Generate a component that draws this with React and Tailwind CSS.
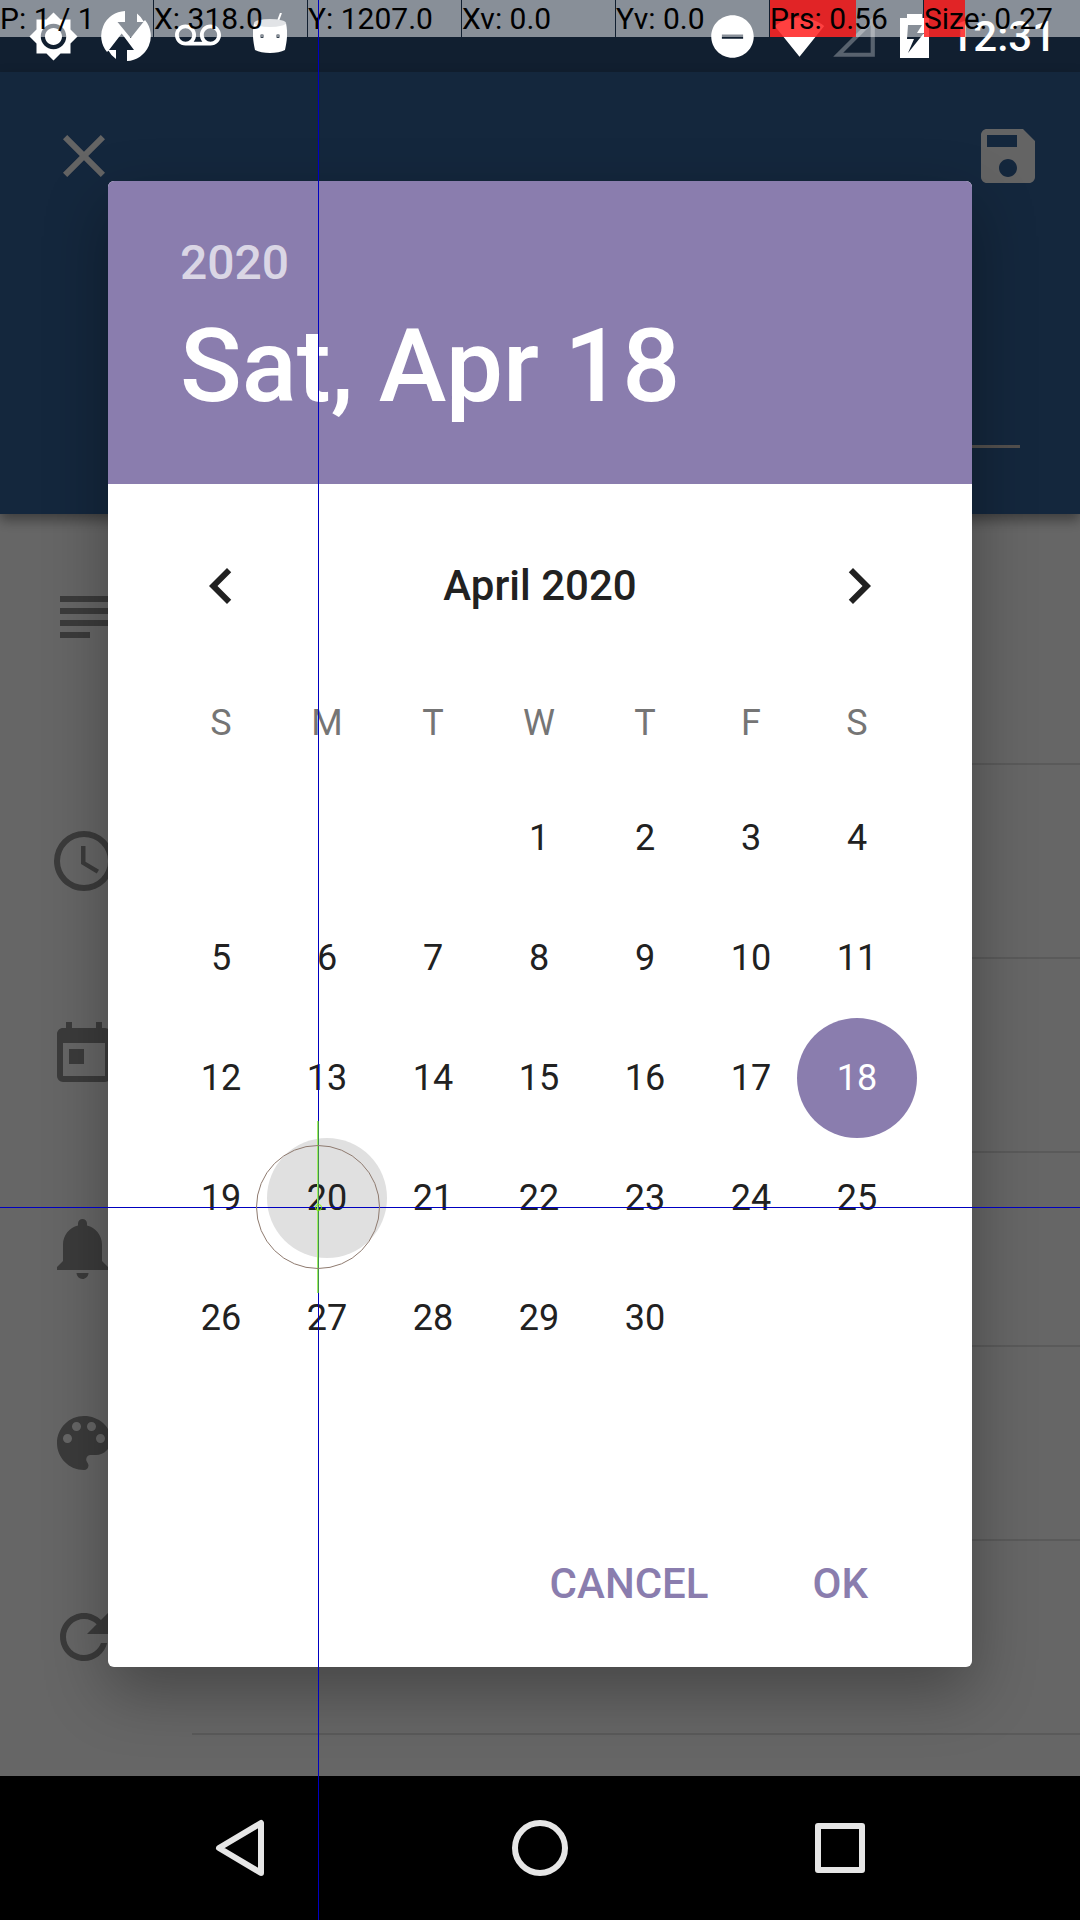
import React from "react";

const ICONS = {
  close: "M19 6.41L17.59 5 12 10.59 6.41 5 5 6.41 10.59 12 5 17.59 6.41 19 12 13.41 17.59 19 19 17.59 13.41 12z",
  save: "M17 3H5c-1.11 0-2 .9-2 2v14c0 1.1.89 2 2 2h14c1.1 0 2-.9 2-2V7l-4-4zm-5 16c-1.66 0-3-1.34-3-3s1.34-3 3-3 3 1.34 3 3-1.34 3-3 3zm3-10H5V5h10v4z",
  text: "M4 5H20V7H4zM4 9H20V11H4zM4 13H20V15H4zM4 17H14V19H4z",
  clock: "M12 20A8 8 0 0 0 20 12 8 8 0 0 0 12 4 8 8 0 0 0 4 12 8 8 0 0 0 12 20M12 2A10 10 0 0 1 22 12 10 10 0 0 1 12 22C6.47 22 2 17.5 2 12A10 10 0 0 1 12 2M12.5 7V12.25L17 14.92 16.25 16.15 11 13V7H12.5Z",
  calendar: "M7 10H12V15H7M19 19H5V8H19M19 3H18V1H16V3H8V1H6V3H5C3.89 3 3 3.9 3 5V19A2 2 0 0 0 5 21H19A2 2 0 0 0 21 19V5A2 2 0 0 0 19 3Z",
  bell: "M11.5 22C11.64 22 11.77 22 11.9 21.96 12.55 21.82 13.09 21.38 13.34 20.78 13.44 20.54 13.5 20.27 13.5 20H9.5A2 2 0 0 0 11.5 22M18 10.5C18 7.43 15.86 4.86 13 4.18V3.5A1.5 1.5 0 0 0 11.5 2 1.5 1.5 0 0 0 10 3.5V4.18C7.13 4.86 5 7.43 5 10.5V16L3 18V19H20V18L18 16",
  palette: "M12 3c-4.97 0-9 4.03-9 9s4.03 9 9 9c.83 0 1.5-.67 1.5-1.5 0-.39-.15-.74-.39-1.01-.23-.26-.38-.61-.38-.99 0-.83.67-1.5 1.5-1.5H16c2.76 0 5-2.24 5-5 0-4.42-4.03-8-9-8zm-5.500 9c-.83 0-1.5-.67-1.5-1.500S5.670 9 6.500 9 8 9.670 8 10.500 7.330 12 6.500 12zm3-4C8.670 8 8 7.330 8 6.500S8.670 5 9.500 5s1.500.670 1.500 1.500S10.330 8 9.500 8zm5 0c-.83 0-1.5-.67-1.5-1.500S13.670 5 14.500 5s1.500.670 1.500 1.500S15.330 8 14.500 8zm3 4c-.83 0-1.5-.67-1.5-1.500S16.670 9 17.500 9s1.500.670 1.500 1.500-.67 1.500-1.500 1.500z",
  refresh: "M17.65 6.35C16.2 4.9 14.21 4 12 4c-4.42 0-7.99 3.58-7.99 8s3.57 8 7.99 8c3.73 0 6.84-2.55 7.73-6h-2.08c-.82 2.33-3.04 4-5.65 4-3.31 0-6-2.69-6-6s2.69-6 6-6c1.66 0 3.14.69 4.22 1.78L13 11h7V4l-2.35 2.35z",
  chevronLeft: "M15.41 7.41L14 6l-6 6 6 6 1.41-1.41L10.83 12z",
  chevronRight: "M10 6L8.590 7.410 13.170 12l-4.580 4.590L10 18l6-6z",
  brightness: "M20 8.690V4h-4.690L12 .690 8.690 4H4v4.690L.690 12 4 15.310V20h4.690L12 23.310 15.310 20H20v-4.690L23.310 12 20 8.690zM12 18c-3.310 0-6-2.690-6-6s2.690-6 6-6 6 2.690 6 6-2.690 6-6 6zm0-10c-2.210 0-4 1.790-4 4s1.790 4 4 4 4-1.790 4-4-1.790-4-4-4z",
  voicemail: "M18.5 6C15.46 6 13 8.46 13 11.5c0 1.33.47 2.55 1.26 3.5H9.740c.79-.95 1.26-2.17 1.26-3.5C11 8.46 8.54 6 5.5 6S0 8.46 0 11.5 2.46 17 5.5 17h13c3.04 0 5.5-2.46 5.5-5.5S21.54 6 18.5 6zm-13 9C3.57 15 2 13.43 2 11.5S3.57 8 5.5 8 9 9.57 9 11.5 7.43 15 5.5 15zm13 0c-1.93 0-3.5-1.57-3.5-3.5S16.57 8 18.5 8 22 9.57 22 11.5 20.43 15 18.5 15z",
  doNotDisturb: "M12 2C6.48 2 2 6.48 2 12s4.48 10 10 10 10-4.48 10-10S17.52 2 12 2zm5 11H7v-2h10v2z",
  wifi: "M12 21.5L23.640 7C23.190 6.660 18.710 3 12 3S.810 6.660.360 7L12 21.500z",
  noSignal: "M20 6.83V20H6.83L20 6.83M22 2L2 22h20V2z",
};

const Icon = ({ name, className }) => (
  <svg viewBox="0 0 24 24" fill="currentColor" fillRule="evenodd" className={className} aria-hidden="true">
    <path d={ICONS[name]} />
  </svg>
);

const StatusBar = () => (
  <header className="flex h-18 items-center justify-between bg-[#111f30] pr-6 pl-7 text-white">
    <div className="flex items-center">
      <Icon name="brightness" className="size-[51px]" />
      <svg viewBox="0 0 50 50" className="ml-[22px] size-[50px]" fill="currentColor" aria-hidden="true">
        <path d="M24 0A25 25 0 0 0 6 41L8 39L20.700 22.500 33 39H26V50A25 25 0 0 0 44 9L29.700 27 16.500 11H24ZM36 2.500V11H43A25 25 0 0 0 36 2.500ZM7 39A25 25 0 0 0 15 48V39Z" />
      </svg>
      <Icon name="voicemail" className="ml-6 size-[46px]" />
      <svg viewBox="0 0 34 46" className="ml-8 h-[46px] w-[34px]" aria-hidden="true">
        <path d="M25 8L28 0" stroke="#fff" strokeWidth="2" />
        <path d="M1 10C5 14 29 14 33 10C35 20 34 28 32 37C25 41 9 41 2 37C0 28-1 20 1 10Z" fill="#fff" />
        <ellipse cx="17" cy="10" rx="16" ry="4" fill="#c2c7cc" />
        <circle cx="9" cy="23" r="2" fill="#111f30" />
        <circle cx="25" cy="23" r="2" fill="#111f30" />
      </svg>
    </div>
    <div className="flex items-center">
      <Icon name="doNotDisturb" className="size-[51px]" />
      <Icon name="wifi" className="ml-4 size-[51px]" />
      <Icon name="noSignal" className="ml-1 size-[50px] text-white/30" />
      <svg viewBox="0 0 29 44" className="ml-[21px] h-11 w-[29px]" fill="currentColor" fillRule="evenodd" aria-hidden="true">
        <path d="M7 0H22V4H29V44H0V4H7ZM8 11L7 25H14L8 39L24 19H17L22 11Z" />
      </svg>
      <time className="ml-5 pt-0.5 text-[42px] leading-none font-medium">12:31</time>
    </div>
  </header>
);

const ROWS = [
  ["clock", "Time"],
  ["calendar", "Date"],
  ["bell", "Notification"],
  ["palette", "Color"],
  ["refresh", "Repeat"],
];

const ReminderForm = () => (
  <div className="flex flex-1 flex-col bg-white">
    <div className="relative h-[442px] bg-[#346198] shadow-[0_6px_12px_rgba(0,0,0,0.4)]">
      <div className="flex h-42 items-center justify-between pr-9 pl-12 text-[#fafafa]">
        <button type="button" aria-label="Close">
          <Icon name="close" className="size-18" />
        </button>
        <button type="button" aria-label="Save">
          <Icon name="save" className="size-18" />
        </button>
      </div>
      <div className="pt-[109px] pr-15 pl-48">
        <input type="text" aria-label="Title" className="block h-[99px] w-full border-b-3 border-[#cfc8c4] bg-transparent text-5xl text-white outline-none" />
      </div>
    </div>
    <div className="flex h-[250px] pl-12">
      <Icon name="text" className="mt-[67px] size-18 text-[#939393]" />
      <div className="-mb-px ml-18 flex-1 border-b-2 border-[#e0e0e0]" />
    </div>
    {ROWS.map(([icon, label]) => (
      <div key={icon} className="flex h-[194px] items-center pl-12" aria-label={label}>
        <Icon name={icon} className="size-18 text-[#939393]" />
        <div className="-mb-px ml-18 flex-1 self-stretch border-b-2 border-[#e0e0e0]" />
      </div>
    ))}
  </div>
);

const WEEKDAYS = ["S", "M", "T", "W", "T", "F", "S"];
const WEEKS = [
  [null, null, null, 1, 2, 3, 4],
  [5, 6, 7, 8, 9, 10, 11],
  [12, 13, 14, 15, 16, 17, 18],
  [19, 20, 21, 22, 23, 24, 25],
  [26, 27, 28, 29, 30, null, null],
];

const dayStyle = (day) => {
  if (day === 18) return "bg-[#8a7dae] text-white";
  if (day === 20) return "bg-[#e0e0e0]";
  return "";
};

const DatePicker = () => (
  <section role="dialog" aria-label="Choose a date" className="w-4/5 overflow-hidden rounded-md bg-white text-[#212121] shadow-[0_24px_64px_rgba(0,0,0,0.32)]">
    <div className="h-[303px] bg-[#8a7dae] px-18 pt-[54px] font-medium text-white">
      <button type="button" className="block text-5xl leading-14 text-white/70">2020</button>
      <h1 className="mt-[15px] text-[102px] leading-30">Sat, Apr 18</h1>
    </div>
    <div className="px-15 pt-5">
      <div className="flex h-41 items-center justify-between">
        <button type="button" aria-label="Previous month" className="flex w-[106px] justify-center">
          <Icon name="chevronLeft" className="size-18" />
        </button>
        <h2 className="text-[42px] leading-12 font-medium">April 2020</h2>
        <button type="button" aria-label="Next month" className="flex w-[106px] justify-center">
          <Icon name="chevronRight" className="size-18" />
        </button>
      </div>
      <div className="pr-0.5">
        <table className="w-full table-fixed text-4xl">
          <thead>
            <tr className="h-[110px] text-[#757575]">
              {WEEKDAYS.map((d, i) => (
                <th key={i} scope="col" className="p-0 text-center font-normal">{d}</th>
              ))}
            </tr>
          </thead>
          <tbody>
            {WEEKS.map((week, w) => (
              <tr key={w} className="h-30">
                {week.map((day, i) => (
                  <td key={i} className="p-0">
                    {day && (
                      <div className="flex justify-center">
                        <button type="button" className={`-mx-2 size-30 shrink-0 rounded-full ${dayStyle(day)}`}>{day}</button>
                      </div>
                    )}
                  </td>
                ))}
              </tr>
            ))}
          </tbody>
        </table>
      </div>
    </div>
    <div className="mt-30 flex h-[169px] items-center justify-end gap-14 pt-0.5 pr-20 text-[42px] leading-12 font-medium text-[#8a7dae]">
      <button type="button" className="px-6 py-3">CANCEL</button>
      <button type="button" className="px-6 py-3">OK</button>
    </div>
  </section>
);

const NavigationBar = () => (
  <nav className="flex h-36 items-center justify-center bg-black text-[#e6e6e6]">
    <button type="button" aria-label="Back" className="flex w-75 justify-center">
      <svg viewBox="0 0 72 72" className="size-18" fill="none" stroke="currentColor" strokeWidth="6" strokeLinejoin="round">
        <path d="M15 36L57 11V61Z" />
      </svg>
    </button>
    <button type="button" aria-label="Home" className="flex w-75 justify-center">
      <svg viewBox="0 0 72 72" className="size-18" fill="none" stroke="currentColor" strokeWidth="6">
        <circle cx="36" cy="36" r="25" />
      </svg>
    </button>
    <button type="button" aria-label="Recent apps" className="flex w-75 justify-center">
      <svg viewBox="0 0 72 72" className="size-18" fill="none" stroke="currentColor" strokeWidth="6" strokeLinejoin="round">
        <path d="M14 14H58V58H14Z" />
      </svg>
    </button>
  </nav>
);

const READOUTS = [
  ["P: 1 / 1", 0],
  ["X: 318.0", 0],
  ["Y: 1207.0", 0],
  ["Xv: 0.0", 0],
  ["Yv: 0.0", 0],
  ["Prs: 0.56", 0.56],
  ["Size: 0.27", 0.26],
];

/* Touch readouts, crosshair and contact ellipse drawn over the whole screen. */
const PointerOverlay = () => (
  <div className="pointer-events-none absolute inset-0 overflow-hidden">
    <div className="grid grid-cols-[repeat(6,153px)_1fr] gap-px">
      {READOUTS.map(([text, level]) => (
        <div key={text} className="relative h-[37px] bg-white/50">
          <div className="absolute inset-y-0 left-0 bg-[#ff0000]/75" style={{ width: `${level * 100}%` }} />
          <span className="relative block text-[30px] leading-[38px] whitespace-nowrap text-black">{text}</span>
        </div>
      ))}
    </div>
    <div className="absolute inset-y-0 left-[318px] w-px bg-[#0000c0]" />
    <div className="absolute inset-x-0 top-[1207px] h-px bg-[#0000c0]" />
    <div className="absolute top-[1121px] left-[317px] h-43 w-0.5 border-r border-l border-r-[#408f50] border-l-[#a0f060]" />
    <div className="absolute top-[1145px] left-64 size-31 rounded-full border border-[#8f7b70]" />
    <div className="absolute top-[1204px] left-[315px] size-[7px] rounded-full border border-[#80f000]" />
  </div>
);

export default function App() {
  return (
    <div className="relative flex min-h-screen flex-col bg-white font-[Roboto,sans-serif]">
      <StatusBar />
      <main className="relative flex flex-1 flex-col">
        <ReminderForm />
        <div className="absolute inset-0 flex items-center justify-center overflow-hidden bg-black/60">
          <DatePicker />
        </div>
      </main>
      <NavigationBar />
      <PointerOverlay />
    </div>
  );
}
